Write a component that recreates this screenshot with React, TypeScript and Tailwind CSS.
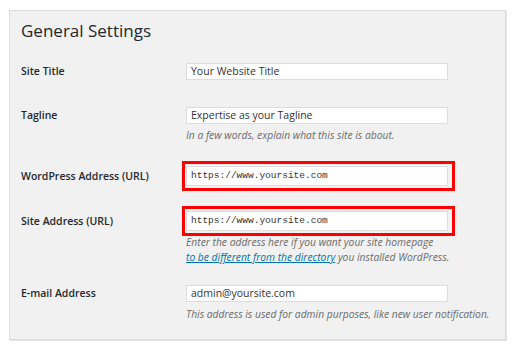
import type { ReactNode } from "react"

const sans = { fontFamily: '"Open Sans", "Noto Sans", sans-serif' }

function Field({ value, mono = false, tall = false }: { value: string; mono?: boolean; tall?: boolean }) {
  return (
    <div
      className={`w-[262px] ${tall ? "h-[20px]" : "h-[17px]"} border border-[#dddddd] bg-white px-[4px] flex items-center text-[#333] ${
        mono ? "font-mono text-[9.5px]" : "text-[10.5px]"
      }`}
    >
      {value}
    </div>
  )
}

function Highlight({ children }: { children: ReactNode }) {
  return (
    <div className="-ml-[4px] w-[273px] border-[3px] border-[#ff0000] pl-[1px] py-[2px]">{children}</div>
  )
}

function Row({
  label,
  top,
  labelTop = 0,
  children,
}: {
  label: string
  top: string
  labelTop?: number
  children: ReactNode
}) {
  return (
    <div className={`flex ${top}`}>
      <div
        className="w-[165px] shrink-0 text-[10.5px] font-semibold text-[#23282d] leading-[17px]"
        style={labelTop ? { paddingTop: labelTop } : undefined}
      >
        {label}
      </div>
      <div className="flex flex-col">{children}</div>
    </div>
  )
}

function Note({ children, top = "mt-0" }: { children: ReactNode; top?: string }) {
  return <p className={`${top} text-[10.3px] italic text-[#6b6b6b] leading-[15px]`}>{children}</p>
}

export default function App() {
  return (
    <div className="w-[515px] h-[351px] bg-white pt-[10px] pl-[9px]" style={sans}>
      <div className="w-[497px] h-[330px] border border-[#dcdcdc] bg-[#f1f1f1] pl-[11px] pt-[10px] shadow-[1px_1px_0_#e5e5e5]">
        <h1 className="text-[17px] leading-[20px] text-[#23282d]">General Settings</h1>

        <Row label="Site Title" top="mt-[22px]">
          <Field value="Your Website Title" />
        </Row>

        <Row label="Tagline" top="mt-[27px]">
          <Field value="Expertise as your Tagline" />
          <Note top="mt-[4px]">In a few words, explain what this site is about.</Note>
        </Row>

        <Row label="WordPress Address (URL)" top="mt-[18px]" labelTop={7}>
          <Highlight>
            <Field value="https://www.yoursite.com" mono tall />
          </Highlight>
        </Row>

        <Row label="Site Address (URL)" top="mt-[15px]" labelTop={7}>
          <Highlight>
            <Field value="https://www.yoursite.com" mono tall />
          </Highlight>
          <Note top="-mt-[1px]">
            Enter the address here if you want your site homepage
            <br />
            <a className="text-[#0073aa] underline">to be different from the directory</a> you installed WordPress.
          </Note>
        </Row>

        <Row label="E-mail Address" top="mt-[20px]">
          <Field value="admin@yoursite.com" />
          <Note top="mt-[5px]">This address is used for admin purposes, like new user notification.</Note>
        </Row>
      </div>
    </div>
  )
}
